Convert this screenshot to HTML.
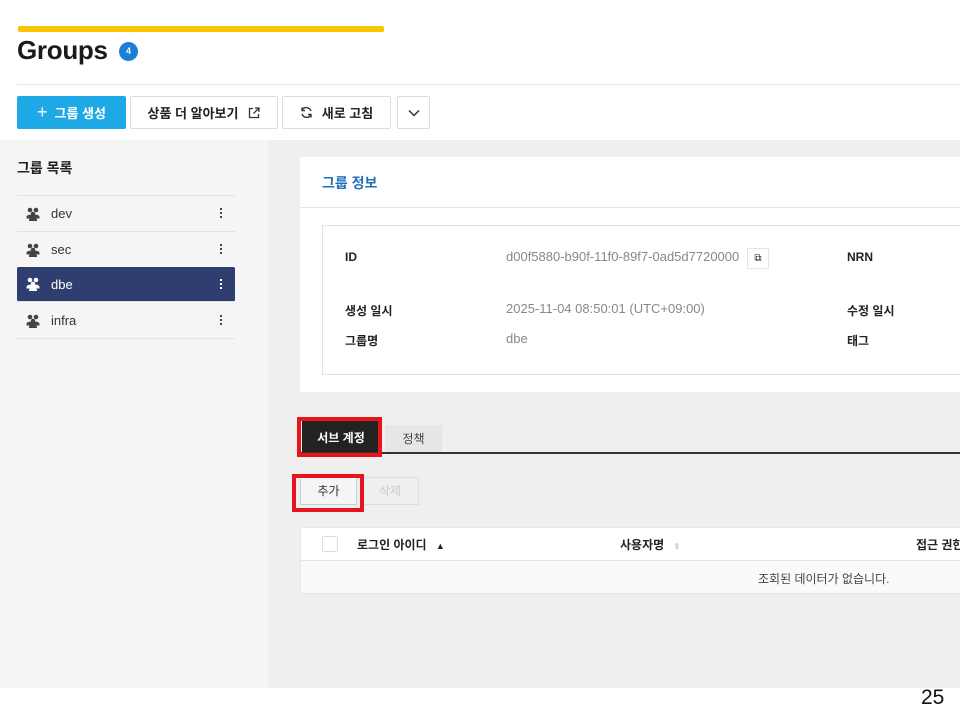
<!DOCTYPE html>
<html><head><meta charset="utf-8"><style>
*{margin:0;padding:0;box-sizing:border-box}
body{width:960px;height:720px;overflow:hidden;background:#fff;font-family:"Liberation Sans","Noto Sans CJK KR",sans-serif;position:relative;color:#222}
.a{position:absolute;white-space:nowrap}
.btn{position:absolute;top:96px;height:33px;border:1px solid #ddd;background:#fff;font-size:13px;font-weight:bold;display:flex;align-items:center;justify-content:center;color:#222;border-radius:2px}
.row{position:absolute;left:17px;width:218px;height:36px;border-bottom:1px solid #e2e2e2;font-size:13px;color:#333;display:flex;align-items:center}
.row .ic{margin-left:9px;width:14px;height:14px}
.row .t{margin-left:11px}
.row .k{position:absolute;right:12px;top:12px;width:3px}
.k i{display:block;width:2px;height:2px;background:#444;margin-bottom:2px}
.lab{position:absolute;font-size:12px;font-weight:bold;color:#222;white-space:nowrap}
.val{position:absolute;font-size:13px;color:#888;white-space:nowrap}
</style></head><body>
<div class="a" style="left:18px;top:26px;width:366px;height:6px;background:#fbc400;border-radius:2px"></div>
<div class="a" style="left:17px;top:35px;font-size:26px;font-weight:bold;color:#1a1a1a;letter-spacing:-0.3px">Groups</div>
<div class="a" style="left:119px;top:42px;width:19px;height:19px;border-radius:50%;background:#1b7fd6;color:#fff;font-size:9px;font-weight:bold;text-align:center;line-height:19px">4</div>
<div class="a" style="left:17px;top:84px;width:943px;height:1px;background:#e5e5e5"></div>
<div class="btn" style="left:17px;width:109px;background:#1ea9e6;border-color:#1ea9e6;color:#fff"><span style="font-size:18px;font-weight:normal;margin-right:7px">+</span>그룹 생성</div>
<div class="btn" style="left:130px;width:148px">상품 더 알아보기 <svg width="12" height="12" style="margin-left:10px" viewBox="0 0 12 12" fill="none" stroke="#333" stroke-width="1.3"><path d="M5 1.5H1.5v9h9V7M7 1h4v4M11 1L5.5 6.5"/></svg></div>
<div class="btn" style="left:282px;width:109px"><svg width="13" height="13" viewBox="0 0 13 13" fill="none" stroke="#333" stroke-width="1.4" style="margin-right:9px"><path d="M11 5A5 5 0 0 0 2 4M2 8a5 5 0 0 0 9 1"/><path d="M2 1.5V4.5h3M11 11.5V8.5H8"/></svg>새로 고침</div>
<div class="btn" style="left:397px;width:33px"><svg width="12" height="8" viewBox="0 0 12 8" fill="none" stroke="#333" stroke-width="1.5"><path d="M1 1.5l5 5 5-5"/></svg></div>

<div class="a" style="left:0;top:140px;width:268px;height:548px;background:#f5f5f5"></div>
<div class="a" style="left:268px;top:140px;width:692px;height:548px;background:#efefef"></div>
<div class="a" style="left:17px;top:158px;font-size:14px;font-weight:bold;color:#222">그룹 목록</div>
<div class="a" style="left:17px;top:195px;width:218px;height:1px;background:#e2e2e2"></div>
<svg width="0" height="0" style="position:absolute"><defs><g id="gi"><circle cx="4" cy="3" r="2.3"/><circle cx="10" cy="3" r="2.3"/><circle cx="7" cy="7" r="2.3"/><path d="M0.5 10c0-3 7-3 7 0v1.5h-7zM6.5 10c0-3 7-3 7 0v1.5h-7zM3 13c0-3 8-3 8 0v1H3z"/></g></defs></svg>
<div class="row" style="top:196px"><svg class="ic" viewBox="0 0 14 14" fill="#444"><use href="#gi"/></svg><span class="t">dev</span><span class="k"><i></i><i></i><i></i></span></div>
<div class="row" style="top:232px"><svg class="ic" viewBox="0 0 14 14" fill="#444"><use href="#gi"/></svg><span class="t">sec</span><span class="k"><i></i><i></i><i></i></span></div>
<div class="row" style="top:267px;background:#2f3e6e;color:#fff;border-radius:2px;height:35px"><svg class="ic" viewBox="0 0 14 14" fill="#fff"><use href="#gi"/></svg><span class="t">dbe</span><span class="k"><i style="background:#fff"></i><i style="background:#fff"></i><i style="background:#fff"></i></span></div>
<div class="row" style="top:303px"><svg class="ic" viewBox="0 0 14 14" fill="#444"><use href="#gi"/></svg><span class="t">infra</span><span class="k"><i></i><i></i><i></i></span></div>

<div class="a" style="left:300px;top:157px;width:660px;height:235px;background:#fff"></div>
<div class="a" style="left:322px;top:173px;font-size:14px;font-weight:bold;color:#1f72b8">그룹 정보</div>
<div class="a" style="left:300px;top:207px;width:660px;height:1px;background:#e5e5e5"></div>
<div class="a" style="left:322px;top:225px;width:640px;height:150px;border:1px solid #e2e2e2;border-right:none"></div>
<div class="lab" style="left:345px;top:250px">ID</div>
<div class="val" style="left:506px;top:249px">d00f5880-b90f-11f0-89f7-0ad5d7720000</div>
<div class="a" style="left:747px;top:248px;width:22px;height:21px;border:1px solid #e5e5e5;font-size:10px;text-align:center;line-height:19px">⧉</div>
<div class="lab" style="left:847px;top:250px">NRN</div>
<div class="lab" style="left:345px;top:302px">생성 일시</div>
<div class="val" style="left:506px;top:301px">2025-11-04 08:50:01 (UTC+09:00)</div>
<div class="lab" style="left:847px;top:302px">수정 일시</div>
<div class="lab" style="left:345px;top:332px">그룹명</div>
<div class="val" style="left:506px;top:331px">dbe</div>
<div class="lab" style="left:847px;top:332px">태그</div>

<div class="a" style="left:302px;top:420px;width:78px;height:33px;background:#222;color:#fff;font-size:12px;font-weight:bold;text-align:center;line-height:37px">서브 계정</div>
<div class="a" style="left:385px;top:425px;width:57px;height:28px;background:#e6e6e6;color:#444;font-size:12px;text-align:center;line-height:28px">정책</div>
<div class="a" style="left:300px;top:452px;width:660px;height:2px;background:#333"></div>
<div class="a" style="left:297px;top:417px;width:85px;height:40px;border:4px solid #e8141b"></div>
<div class="a" style="left:300px;top:477px;width:57px;height:28px;background:#f4f5f7;border:1px solid #c8ccd3;font-size:12px;color:#333;text-align:center;line-height:26px">추가</div>
<div class="a" style="left:361px;top:477px;width:58px;height:28px;border:1px solid #ddd;font-size:12px;color:#ccc;text-align:center;line-height:26px">삭제</div>
<div class="a" style="left:292px;top:474px;width:72px;height:38px;border:4px solid #e8141b"></div>

<div class="a" style="left:300px;top:527px;width:660px;height:67px;background:#fafafa;border:1px solid #e6e6e6;border-right:none"></div>
<div class="a" style="left:301px;top:528px;width:659px;height:33px;background:#fff;border-bottom:1px solid #e6e6e6"></div>
<div class="a" style="left:322px;top:536px;width:16px;height:16px;border:1px solid #ddd;background:#fff;border-radius:2px"></div>
<div class="lab" style="left:357px;top:536px">로그인 아이디 <span style="font-size:9px;margin-left:6px">▲</span></div>
<div class="lab" style="left:620px;top:536px">사용자명 <span style="font-size:8px;color:#ccc;margin-left:6px">⇕</span></div>
<div class="lab" style="left:916px;top:536px">접근 권한</div>
<div class="a" style="left:758px;top:570px;font-size:12px;color:#444">조회된 데이터가 없습니다.</div>
<div class="a" style="left:921px;top:686px;font-size:21px;color:#111">25</div>
</body></html>
